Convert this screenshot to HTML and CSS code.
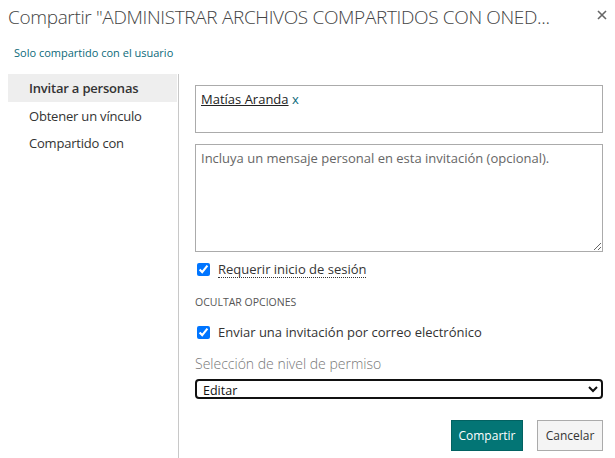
FILE: index.html
```html
<!DOCTYPE html>
<html lang="es">
<head>
    <meta charset="UTF-8">
    <title>Compartir</title>
    <link rel="stylesheet" href="styles.css">
</head>
<body>
    <div class="dialog">
        <div class="dialog-header">
            <h1 class="dialog-title">Compartir "ADMINISTRAR ARCHIVOS COMPARTIDOS CON ONED...</h1>
            <button class="close-btn" aria-label="Cerrar">
                <svg width="10" height="10" viewBox="0 0 10 10"><path d="M1 1L9 9M9 1L1 9" stroke="#666" stroke-width="1.6"/></svg>
            </button>
        </div>
        <div class="shared-note">Solo compartido con el usuario</div>

        <div class="dialog-body">
            <ul class="side-nav">
                <li class="active">Invitar a personas</li>
                <li>Obtener un vínculo</li>
                <li>Compartido con</li>
            </ul>

            <div class="panel">
                <div class="people-box">
                    <span class="person">Matías Aranda</span> <span class="remove">x</span>
                </div>
                <textarea class="message" placeholder="Incluya un mensaje personal en esta invitación (opcional)."></textarea>

                <label class="check-row">
                    <input type="checkbox" checked>
                    <span class="dotted">Requerir inicio de sesión</span>
                </label>

                <div class="options-toggle">OCULTAR OPCIONES</div>

                <label class="check-row">
                    <input type="checkbox" checked>
                    <span>Enviar una invitación por correo electrónico</span>
                </label>

                <div class="perm-label">Selección de nivel de permiso</div>
                <select class="perm-select">
                    <option>Editar</option>
                    <option>Leer</option>
                </select>

                <div class="actions">
                    <button class="btn btn-primary">Compartir</button>
                    <button class="btn btn-cancel">Cancelar</button>
                </div>
            </div>
        </div>
    </div>
</body>
</html>
```

FILE: styles.css
```css
* {
    margin: 0;
    padding: 0;
    box-sizing: border-box;
}

body {
    background: #fff;
    font-family: 'Open Sans', 'Noto Sans', sans-serif;
    color: #333;
    font-size: 13px;
}

.dialog {
    padding: 0 12px 0 8px;
}

.dialog-header {
    display: flex;
    justify-content: space-between;
    align-items: flex-start;
    height: 36px;
}

.dialog-title {
    font-size: 19px;
    font-weight: 300;
    color: #444;
    line-height: 34px;
    white-space: nowrap;
    letter-spacing: -0.35px;
}

.close-btn {
    border: none;
    background: none;
    margin-top: 8px;
    margin-right: -4px;
    padding: 0;
    cursor: pointer;
}

.shared-note {
    color: #0b6a7a;
    font-size: 11px;
    padding-left: 6px;
    line-height: 18px;
    margin-top: 8px;
}

.dialog-body {
    display: flex;
    margin-top: 12px;
    min-height: 384px;
}

/* navegación lateral */
.side-nav {
    list-style: none;
    width: 171px;
    border-right: 1px solid #c8c8c8;
    flex-shrink: 0;
}

.side-nav li {
    height: 28px;
    line-height: 28px;
    padding-left: 21px;
    font-size: 13px;
    color: #333;
    letter-spacing: -0.2px;
    cursor: pointer;
}

.side-nav li:nth-child(3) {
    line-height: 26px;
}

.side-nav li.active {
    background: #eeeeee;
    font-weight: 600;
    margin-right: 1px;
}

.panel {
    flex: 1;
    padding: 11px 0 0 16px;
}

.people-box {
    height: 48px;
    border: 1px solid #ababab;
    padding: 4px 5px;
    font-size: 13px;
    line-height: 18px;
}

.person {
    color: #222;
    text-decoration: underline;
}

.remove {
    color: #0b6a7a;
}

.message {
    display: block;
    width: 100%;
    height: 108px;
    margin-top: 11px;
    border: 1px solid #ababab;
    padding: 4px 5px;
    font-family: inherit;
    font-size: 13px;
    color: #333;
    resize: vertical;
}

.message::placeholder {
    color: #666;
}

.check-row {
    display: flex;
    align-items: center;
    gap: 8px;
    font-size: 13px;
    color: #333;
    margin-left: 2px;
}

.check-row input {
    width: 13px;
    height: 13px;
    margin: 0;
    accent-color: #0075ff;
}

.panel .check-row:nth-of-type(1) {
    margin-top: 9px;
}

.dotted {
    border-bottom: 1px dotted #333;
    line-height: 16px;
}

.options-toggle {
    font-size: 10.5px;
    color: #555;
    margin-top: 17px;
    line-height: 14px;
}

.options-toggle + .check-row {
    margin-top: 14px;
}

.perm-label {
    font-size: 14px;
    font-weight: 300;
    color: #777;
    margin-top: 13px;
    line-height: 20px;
}

.perm-select {
    display: block;
    width: 100%;
    height: 20px;
    margin-top: 5px;
    border: 2px solid #111;
    border-radius: 4px;
    font-family: inherit;
    font-size: 12.5px;
    color: #111;
    background: #fff;
    padding: 0 2px;
}

.actions {
    display: flex;
    justify-content: flex-end;
    gap: 14px;
    margin-top: 21px;
}

.btn {
    height: 31px;
    border: 1px solid #ababab;
    background: #f4f4f4;
    color: #333;
    font-family: inherit;
    font-size: 12px;
    cursor: pointer;
}

.btn-primary {
    width: 72px;
    background: #037575;
    border-color: #026262;
    color: #fff;
}

.btn-cancel {
    width: 66px;
}
```
